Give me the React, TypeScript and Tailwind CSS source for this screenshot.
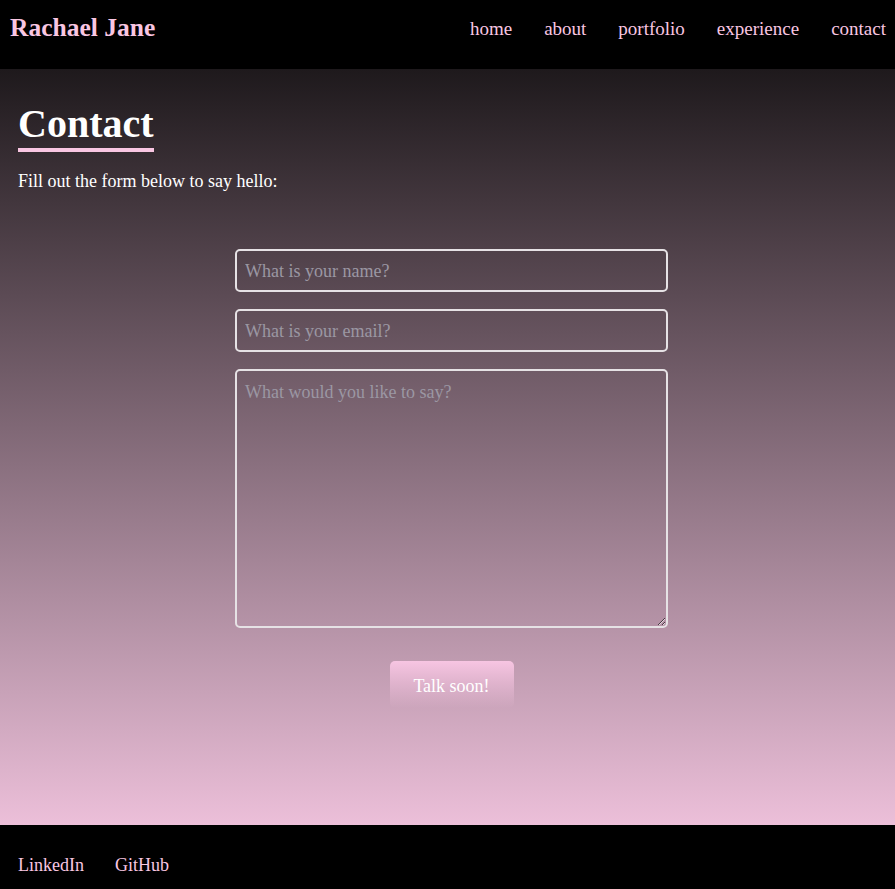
import React from "react";

const font = { fontFamily: '"Liberation Serif", "Times New Roman", serif' };

export default function App() {
  return (
    <div style={font} className="w-[895px] min-h-[889px] flex flex-col text-white">
      <header className="h-[69px] bg-black flex items-start justify-between pl-[10px] pr-[9px]">
        <div className="mt-[15px] text-[25.5px] leading-[26px] font-bold text-[#f9c6e2]">Rachael Jane</div>
        <nav className="mt-[20px] flex gap-[32px] text-[19px] leading-[18px] text-[#f9c6e2]">
          <a>home</a>
          <a>about</a>
          <a>portfolio</a>
          <a>experience</a>
          <a>contact</a>
        </nav>
      </header>
      <main className="h-[756px] bg-[linear-gradient(to_bottom,#1e191c,#ecbfd9)] flex flex-col">
        <div className="pl-[18px] pt-[35px]">
          <h1 className="inline-block text-[40px] leading-[40px] font-bold pb-[4px] border-b-4 border-[#f9c6e2]">
            Contact
          </h1>
          <p className="mt-[20px] text-[18px] leading-[18px]">Fill out the form below to say hello:</p>
        </div>
        <form className="pl-[8px] mt-[59px] flex flex-col items-center">
          <input
            placeholder="What is your name?"
            className="w-[433px] h-[43px] rounded-[5px] border-2 border-[#e6e2e5] bg-transparent px-[8px] pt-[2px] text-[18px] outline-none placeholder:text-[#9b97a3]"
            style={font}
          />
          <input
            placeholder="What is your email?"
            className="mt-[17px] w-[433px] h-[43px] rounded-[5px] border-2 border-[#e6e2e5] bg-transparent px-[8px] pt-[2px] text-[18px] outline-none placeholder:text-[#9b97a3]"
            style={font}
          />
          <textarea
            placeholder="What would you like to say?"
            className="mt-[17px] w-[433px] h-[259px] rounded-[5px] border-2 border-[#e6e2e5] bg-transparent px-[8px] pt-[8px] text-[18px] outline-none placeholder:text-[#9b97a3]"
            style={font}
          />
          <button
            type="button"
            className="mt-[33px] w-[124px] h-[47px] pt-[4px] rounded-[5px] bg-[linear-gradient(to_bottom,#f7c5e2,rgba(247,197,226,0))] text-[18px] text-white"
            style={font}
          >
            Talk soon!
          </button>
        </form>
      </main>
      <footer className="h-[64px] bg-black flex items-start gap-[31px] pl-[18px] pt-[31px] text-[18px] leading-[18px] text-[#f9c6e2]">
        <a>LinkedIn</a>
        <a>GitHub</a>
      </footer>
    </div>
  );
}
